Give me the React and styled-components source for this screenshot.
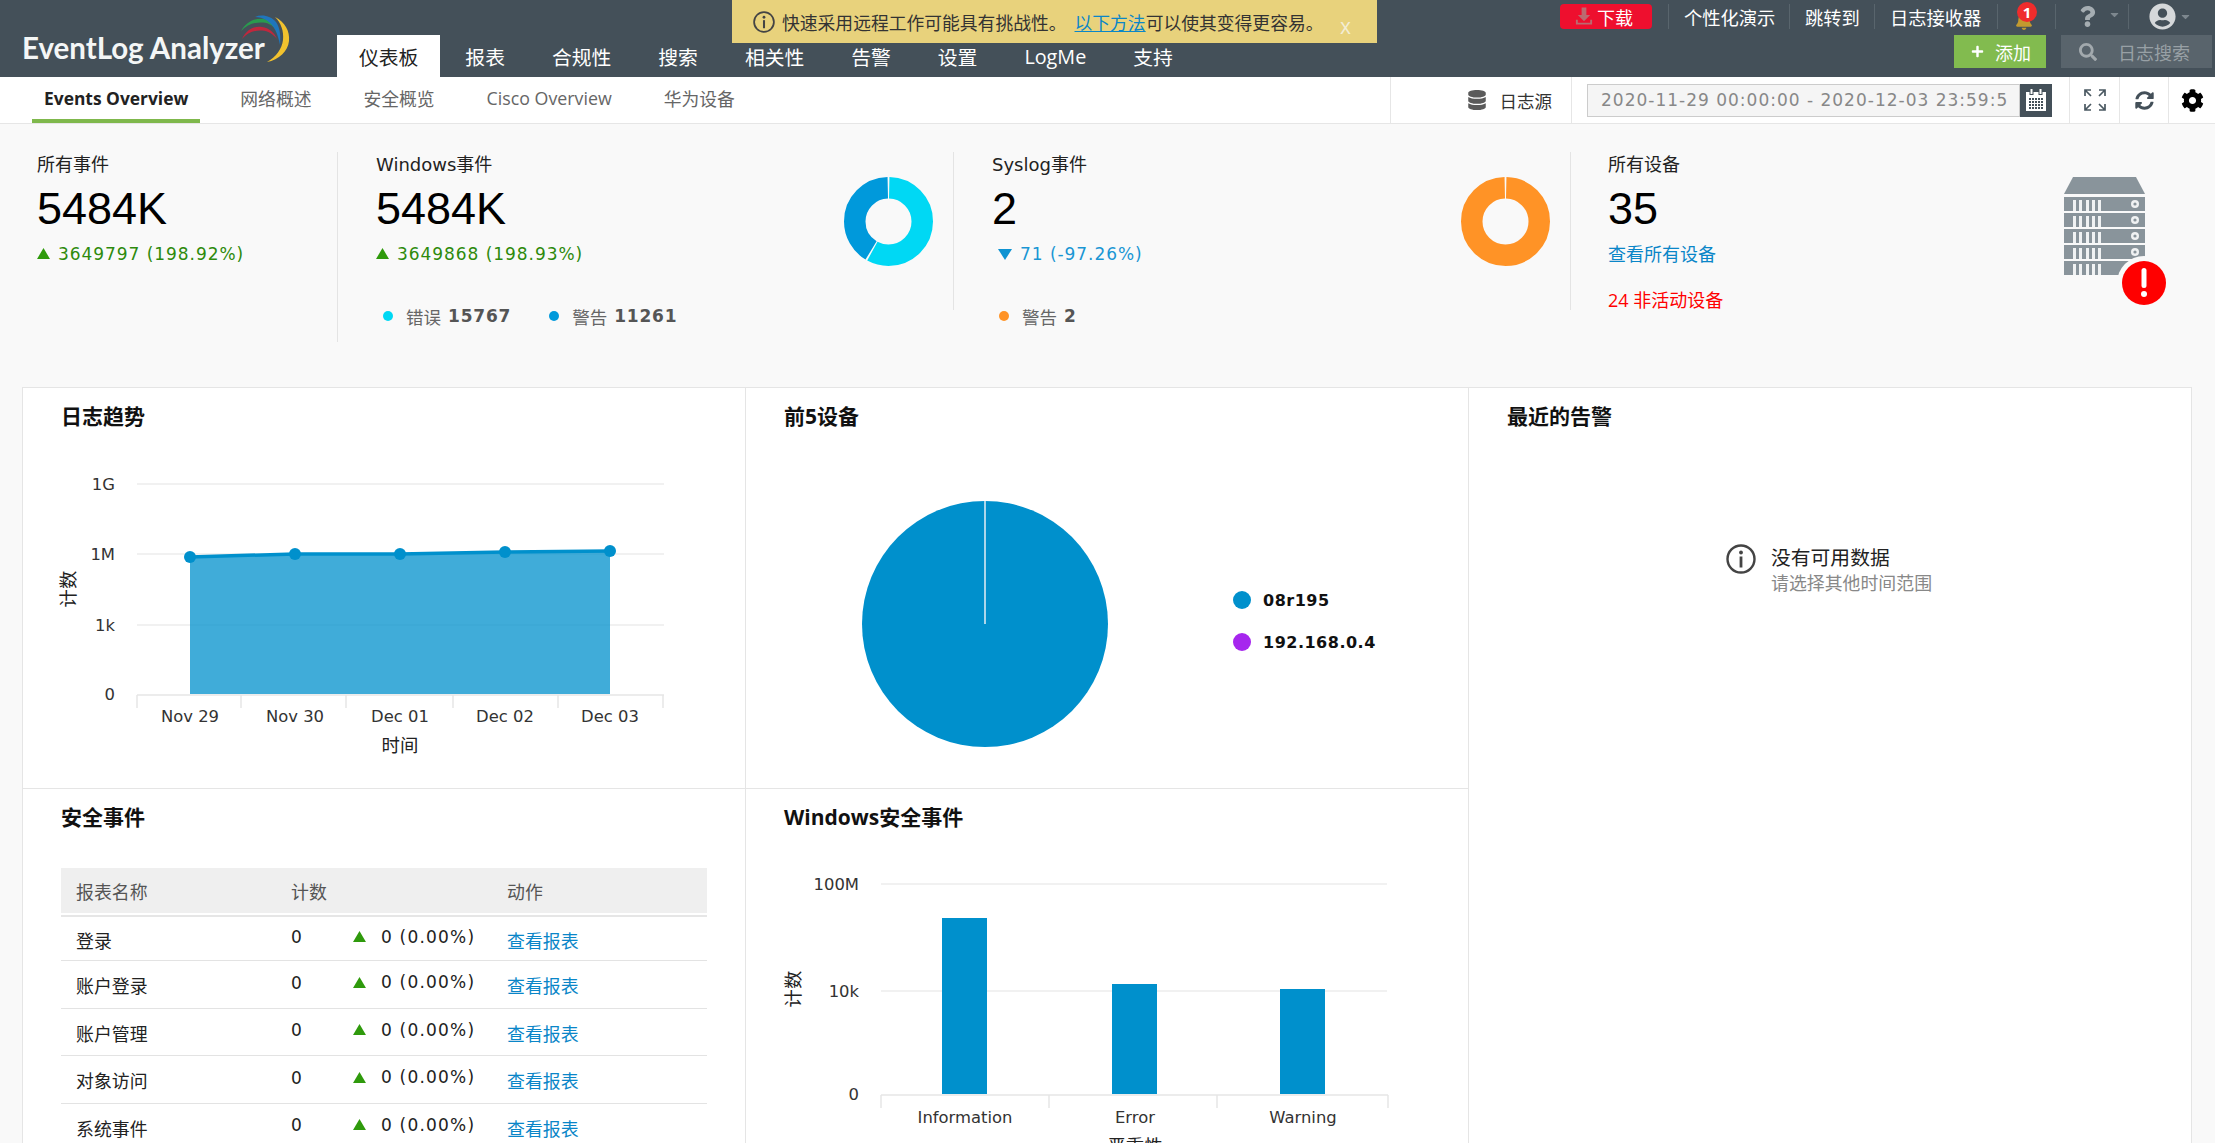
import React from "react";
import styled, { createGlobalStyle } from "styled-components";
import { FaDatabase, FaSyncAlt, FaCog, FaBell, FaSearch, FaPlus, FaQuestion, FaUserCircle, FaCaretDown } from "react-icons/fa";

const FONT = `"Open Sans", "Noto Sans CJK SC", sans-serif`;
const DATA_FONT = `"DejaVu Sans", "Noto Sans CJK SC", sans-serif`;
const BLUE = "#0090cc";
const LINK = "#0a86c8";

const GlobalStyle = createGlobalStyle`
  html, body {
    margin: 0;
    height: 1143px;
    overflow: hidden;
    background: #fff;
    font-family: ${FONT};
    color: #222;
  }
  * { box-sizing: border-box; }
`;

const Page = styled.div`
  width: 2215px;
  height: 1143px;
  overflow: hidden;
  display: flex;
  flex-direction: column;
  background: #f9f9f9;
`;

/* ---------- top bar ---------- */
const Header = styled.header`
  position: relative;
  height: 77px;
  flex: none;
  background: #445059;
  display: flex;
  justify-content: space-between;
  padding-right: 3px;
`;
const Left = styled.div`
  display: flex;
  align-items: flex-end;
`;
const Logo = styled.div`
  position: relative;
  width: 337px;
  height: 77px;
  padding: 30px 0 0 22px;
  font-family: Lato, "Open Sans", sans-serif;
  font-size: 29.5px;
  line-height: 36px;
  font-weight: 700;
  color: #f4f6f6;
  white-space: nowrap;
`;
const LogoArc = styled.svg`
  position: absolute;
  left: 235px;
  top: 12px;
`;
const Tabs = styled.nav`
  display: flex;
  gap: 3px;
`;
const Tab = styled.a`
  height: 42px;
  padding: 1px 22px 0;
  display: flex;
  align-items: center;
  font-size: 19.8px;
  color: ${(p) => (p.$active ? "#222" : "#fff")};
  background: ${(p) => (p.$active ? "#fff" : "transparent")};
`;
const Banner = styled.div`
  position: absolute;
  left: 732px;
  top: 0;
  width: 645px;
  height: 43px;
  background: #e8d27c;
  display: flex;
  align-items: center;
  padding-left: 21px;
  font-size: 17.8px;
  color: #333;
  svg { margin-right: 7px; flex: none; }
  a { color: ${LINK}; text-decoration: underline; margin-left: 8px; }
`;
const BannerClose = styled.span`
  position: absolute;
  left: 608px;
  top: 14px;
  font-size: 21px;
  line-height: 24px;
  color: #f3edd5;
`;
const Right = styled.div`
  display: flex;
  flex-direction: column;
  align-items: flex-end;
  padding-top: 4px;
`;
const TopRow = styled.div`
  display: flex;
  align-items: center;
  height: 25px;
  margin-right: 19px;
`;
const Download = styled.a`
  width: 92px;
  height: 25px;
  margin-right: 16px;
  border-radius: 4px;
  background: #ee0f2e;
  color: #fff;
  font-size: 18px;
  display: flex;
  align-items: center;
  padding-left: 14px;
  gap: 3px;
`;
const TopLink = styled.a`
  height: 25px;
  width: ${(p) => p.$w}px;
  flex: none;
  display: flex;
  align-items: center;
  padding-left: ${(p) => p.$pad || 15}px;
  color: #fff;
  font-size: 18.3px;
  border-left: 1px solid #59656d;
  position: relative;
  white-space: nowrap;
`;
const Badge = styled.span`
  position: absolute;
  left: 19px;
  top: -2px;
  width: 20px;
  height: 20px;
  border-radius: 50%;
  background: #ef2c2c;
  color: #fff;
  font-size: 15px;
  font-weight: 700;
  line-height: 20px;
  text-align: center;
`;
const BottomRow = styled.div`
  display: flex;
  gap: 15px;
  margin-top: 6px;
`;
const AddButton = styled.a`
  width: 92px;
  height: 33px;
  background: #82bb4f;
  color: #fff;
  font-size: 18px;
  display: flex;
  align-items: center;
  padding-left: 17px;
  gap: 11px;
`;
const SearchBox = styled.div`
  width: 151px;
  height: 33px;
  background: #59646c;
  color: #98a0a5;
  font-size: 18px;
  display: flex;
  align-items: center;
  padding-left: 18px;
  gap: 21px;
`;

/* ---------- sub navigation ---------- */
const SubBar = styled.div`
  height: 47px;
  flex: none;
  background: #fff;
  border-bottom: 1px solid #e6e6e6;
  display: flex;
  justify-content: space-between;
`;
const SubTabs = styled.div`
  display: flex;
  padding-left: 32px;
  gap: 28px;
`;
const SubTab = styled.a`
  height: 46px;
  padding: 0 12px 1px;
  display: flex;
  align-items: center;
  font-size: ${(p) => (p.$active ? "17.4px" : "17.8px")};
  font-weight: ${(p) => (p.$active ? 700 : 400)};
  color: ${(p) => (p.$active ? "#222" : "#666")};
  border-bottom: 4px solid ${(p) => (p.$active ? "#7fb84c" : "transparent")};
`;
const Tools = styled.div`
  display: flex;
  align-items: stretch;
`;
const SourceCell = styled.div`
  width: 182px;
  border-left: 1px solid #e6e6e6;
  border-right: 1px solid #e6e6e6;
  display: flex;
  align-items: center;
  justify-content: flex-end;
  gap: 13px;
  padding-right: 19px;
  font-size: 17.5px;
  color: #333;
  svg { color: #5a5a5a; }
`;
const DateCell = styled.div`
  width: 497px;
  padding-left: 15px;
  display: flex;
  align-items: center;
`;
const DateInput = styled.div`
  width: 433px;
  height: 33px;
  background: #f5f5f5;
  border: 1px solid #ccc;
  color: #888;
  font-family: ${DATA_FONT};
  font-size: 17px;
  letter-spacing: 1px;
  line-height: 31px;
  padding-left: 13px;
  white-space: nowrap;
  overflow: hidden;
`;
const DateButton = styled.div`
  width: 32px;
  height: 33px;
  background: #445059;
  display: flex;
  align-items: center;
  justify-content: center;
`;
const IconCell = styled.div`
  width: ${(p) => p.$w}px;
  border-left: 1px solid #e6e6e6;
  display: flex;
  align-items: center;
  justify-content: center;
  color: ${(p) => p.$color || "#333"};
`;

/* ---------- stat strip ---------- */
const StatStrip = styled.section`
  height: 263px;
  flex: none;
  padding-top: 28px;
  display: flex;
  align-items: flex-start;
`;
const Stat = styled.div`
  width: ${(p) => (p.$w ? `${p.$w}px` : "auto")};
  flex: ${(p) => (p.$w ? "none" : 1)};
  height: ${(p) => p.$h}px;
  padding-left: ${(p) => p.$pad}px;
  padding-right: ${(p) => p.$padRight || 0}px;
  border-right: ${(p) => (p.$w ? "1px solid #e4e4e4" : "none")};
  display: flex;
  justify-content: space-between;
  align-items: flex-start;
`;
const StatTitle = styled.div`
  font-family: ${DATA_FONT};
  font-size: 18px;
  line-height: 25px;
  color: #222;
`;
const StatValue = styled.div`
  font-family: "Liberation Sans", sans-serif;
  font-size: 45px;
  line-height: 46px;
  margin-top: 9px;
  color: #000;
`;
const Delta = styled.div`
  margin-top: 10px;
  font-family: ${DATA_FONT};
  font-size: 17px;
  letter-spacing: 0.95px;
  line-height: 24px;
  height: 24px;
  white-space: nowrap;
  display: flex;
  align-items: center;
  gap: 8px;
  color: ${(p) => p.$color};
`;
const Legend = styled.div`
  margin-top: 38px;
  padding-left: ${(p) => p.$pad || 0}px;
  height: 24px;
  display: flex;
  align-items: center;
  gap: 38px;
  font-size: 17.5px;
  color: #666;
  white-space: nowrap;
`;
const LegendItem = styled.span`
  display: flex;
  align-items: center;
`;
const Dot = styled.i`
  width: 10px;
  height: 10px;
  border-radius: 50%;
  background: ${(p) => p.$color};
  margin-right: 13px;
`;
const LegendValue = styled.b`
  margin-left: 7px;
  font-family: ${DATA_FONT};
  font-size: 17px;
  color: #555;
  letter-spacing: 0.8px;
`;
const StatLink = styled.a`
  display: block;
  margin-top: 10px;
  font-size: 18px;
  line-height: 24px;
  color: ${LINK};
`;
const Inactive = styled.div`
  margin-top: 22px;
  font-size: 18px;
  line-height: 24px;
  color: #f00;
`;
const DonutWrap = styled.svg`
  margin-top: 25px;
  flex: none;
`;
const ServerIcon = styled.svg`
  margin-top: 25px;
  flex: none;
`;

/* ---------- panels ---------- */
const Panels = styled.section`
  margin-left: 22px;
  width: 2170px;
  flex: none;
  height: 800px;
  background: #fff;
  border: 1px solid #e5e5e5;
  display: grid;
  grid-template-columns: 723px 723px 1fr;
  grid-template-rows: 401px 1fr;
`;
const Panel = styled.div`
  border-right: ${(p) => (p.$last ? "none" : "1px solid #e5e5e5")};
  border-bottom: ${(p) => (p.$bottom ? "1px solid #e5e5e5" : "none")};
  grid-column: ${(p) => p.$col};
  grid-row: ${(p) => p.$row};
  padding: 14px 0 0 38px;
`;
const PanelTitle = styled.h3`
  margin: 0 0 1px;
  font-size: 21px;
  line-height: 28px;
  font-weight: 700;
  color: #111;
`;
const Chart = styled.svg`
  display: block;
  margin-left: -38px;
  text {
    font-family: ${DATA_FONT};
    font-size: 16.4px;
    fill: #333;
  }
  .axis-title {
    font-size: 18.4px;
    fill: #222;
  }
`;
const PieRow = styled.div`
  display: flex;
  align-items: center;
  margin-left: -38px;
`;
const PieLegend = styled.div`
  display: flex;
  flex-direction: column;
  gap: 20px;
  margin-top: 50px;
`;
const PieLegendItem = styled.div`
  height: 22px;
  display: flex;
  align-items: center;
  gap: 12px;
  font-family: ${DATA_FONT};
  font-size: 16px;
  font-weight: 700;
  letter-spacing: 0.5px;
  color: #111;
  &::before {
    content: "";
    width: 18px;
    height: 18px;
    border-radius: 50%;
    background: ${(p) => p.$color};
  }
`;
const Empty = styled.div`
  display: flex;
  gap: 15px;
  margin: 114px 0 0 219px;
`;
const EmptyText = styled.div`
  padding-top: 1px;
  font-size: 19.8px;
  line-height: 26px;
  color: #222;
  small {
    display: block;
    font-size: 17.9px;
    line-height: 24px;
    color: #888;
  }
`;

/* ---------- table ---------- */
const Table = styled.div`
  width: 646px;
  margin-top: 37px;
  font-size: 17.9px;
`;
const Row = styled.div`
  display: grid;
  grid-template-columns: 215px 62px 154px 1fr;
  padding: ${(p) => (p.$head ? "0" : "2px")} 0 0 15px;
  height: ${(p) => (p.$head ? "45px" : "47.5px")};
  align-items: center;
  background: ${(p) => (p.$head ? "#efefef" : "transparent")};
  color: ${(p) => (p.$head ? "#555" : "#222")};
  border-bottom: ${(p) => (p.$head ? "none" : "1.5px solid #e3e3e3")};
  &:nth-child(2) { border-top: 2px solid #e6e6e6; margin-top: 2px; height: 46px; }
`;
const Num = styled.span`
  font-family: ${DATA_FONT};
  font-size: 17px;
  margin-top: -5px;
`;
const DeltaCell = styled.span`
  display: flex;
  align-items: center;
  gap: 15px;
  font-family: ${DATA_FONT};
  font-size: 17px;
  letter-spacing: 1.2px;
  margin-top: -6px;
  white-space: nowrap;
`;
const Link = styled.a`
  color: ${LINK};
`;

const Up = ({ size = 13 }) => (
  <svg width={size} height={size * 0.85} viewBox="0 0 12 10.2" style={{ flex: "none" }}>
    <path d="M6 0 12 10.2H0Z" fill="#2f9a0c" />
  </svg>
);

const Donut = ({ parts }) => {
  let offset = 0;
  return (
    <DonutWrap width="89" height="89" viewBox="0 0 89 89">
      <g transform="rotate(-90 44.5 44.5)">
        {parts.map(([value, color]) => {
          const el = (
            <circle
              key={color}
              cx="44.5"
              cy="44.5"
              r="33.75"
              fill="none"
              stroke={color}
              strokeWidth="21.5"
              pathLength="100"
              strokeDasharray={`${value - 0.7} ${100 - value + 0.7}`}
              strokeDashoffset={-offset - 0.35}
            />
          );
          offset += value;
          return el;
        })}
      </g>
    </DonutWrap>
  );
};

const Server = () => (
  <ServerIcon width="103" height="130" viewBox="0 0 103 130">
    <path d="M9 0H72L81 17H0Z" fill="#89949b" />
    {[0, 1, 2, 3, 4].map((i) => (
      <g key={i} transform={`translate(0 ${20 + i * 16})`}>
        <rect width="81" height="14" fill="#89949b" />
        {[9, 15, 22, 28, 34].map((x) => (
          <rect key={x} x={x} y="3" width="3" height="11" fill="#f0f2f3" />
        ))}
        <circle cx="71" cy="7" r="4" fill="#f0f2f3" />
        <circle cx="71" cy="7" r="1.6" fill="#89949b" />
      </g>
    ))}
    <circle cx="80" cy="106" r="27" fill="#f9f9f9" />
    <circle cx="80" cy="106" r="22" fill="#f00" />
    <rect x="77.5" y="91" width="5" height="20" rx="2.5" fill="#fff" />
    <circle cx="80" cy="117" r="3" fill="#fff" />
  </ServerIcon>
);

const trendPoints = [[190, 557], [295, 554], [400, 554], [505, 552], [610, 551]];

// coordinates below are page pixels, X0/Y0 bring them back to the chart's corner
const TrendChart = () => {
  const X0 = -23;
  const Y0 = -431;
  const line = trendPoints.map(([x, y]) => `${x + X0},${y + Y0}`).join(" ");
  return (
    <Chart width="722" height="330" viewBox="0 0 722 330">
      {[484, 554, 625].map((y) => (
        <line key={y} x1={137 + X0} x2={664 + X0} y1={y + Y0} y2={y + Y0} stroke="#ececec" strokeWidth="1.5" />
      ))}
      <polygon
        points={`${190 + X0},${694 + Y0} ${line} ${610 + X0},${694 + Y0}`}
        fill={BLUE}
        fillOpacity="0.75"
      />
      <polyline points={line} fill="none" stroke={BLUE} strokeWidth="3.5" />
      {trendPoints.map(([x, y]) => (
        <circle key={x} cx={x + X0} cy={y + Y0} r="6" fill={BLUE} />
      ))}
      <line x1={137 + X0} x2={664 + X0} y1={695 + Y0} y2={695 + Y0} stroke="#e6e6e6" strokeWidth="1.5" />
      {[137, 241, 346, 453, 558, 663].map((x) => (
        <line key={x} x1={x + X0} x2={x + X0} y1={695 + Y0} y2={708 + Y0} stroke="#e6e6e6" strokeWidth="1.5" />
      ))}
      {[["1G", 484], ["1M", 554], ["1k", 625], ["0", 694]].map(([t, y]) => (
        <text key={t} x={115 + X0} y={y + Y0 + 6} textAnchor="end">{t}</text>
      ))}
      {["Nov 29", "Nov 30", "Dec 01", "Dec 02", "Dec 03"].map((t, i) => (
        <text key={t} x={190 + i * 105 + X0} y={722 + Y0} textAnchor="middle">{t}</text>
      ))}
      <text className="axis-title" x={400 + X0} y={752 + Y0} textAnchor="middle">时间</text>
      <text className="axis-title" transform={`translate(${75 + X0} ${589 + Y0}) rotate(-90)`} textAnchor="middle">计数</text>
    </Chart>
  );
};

const bars = [[942, 918, "Information"], [1112, 984, "Error"], [1280, 989, "Warning"]];

const SeverityChart = () => {
  const X0 = -746;
  const Y0 = -832;
  return (
    <Chart width="722" height="330" viewBox="0 0 722 330">
      {[884, 991].map((y) => (
        <line key={y} x1={881 + X0} x2={1387 + X0} y1={y + Y0} y2={y + Y0} stroke="#ececec" strokeWidth="1.5" />
      ))}
      {bars.map(([x, top]) => (
        <rect key={x} x={x + X0} y={top + Y0} width="45" height={1094 - top} fill={BLUE} />
      ))}
      <line x1={881 + X0} x2={1388 + X0} y1={1095 + Y0} y2={1095 + Y0} stroke="#e6e6e6" strokeWidth="1.5" />
      {[881, 1049, 1217, 1388].map((x) => (
        <line key={x} x1={x + X0} x2={x + X0} y1={1095 + Y0} y2={1108 + Y0} stroke="#e6e6e6" strokeWidth="1.5" />
      ))}
      {[["100M", 884], ["10k", 991], ["0", 1094]].map(([t, y]) => (
        <text key={t} x={859 + X0} y={y + Y0 + 6} textAnchor="end">{t}</text>
      ))}
      {bars.map(([x, , t]) => (
        <text key={t} x={x + 23 + X0} y={1123 + Y0} textAnchor="middle">{t}</text>
      ))}
      <text className="axis-title" x={1135 + X0} y={1153 + Y0} textAnchor="middle">严重性</text>
      <text className="axis-title" transform={`translate(${800 + X0} ${989 + Y0}) rotate(-90)`} textAnchor="middle">计数</text>
    </Chart>
  );
};

const rows = ["登录", "账户登录", "账户管理", "对象访问", "系统事件"];
const tabs = ["报表", "合规性", "搜索", "相关性", "告警", "设置", "LogMe", "支持"];
const subTabs = ["网络概述", "安全概览", "Cisco Overview", "华为设备"];

const InfoIcon = ({ size, color }) => (
  <svg width={size} height={size} viewBox="0 0 30 30">
    <circle cx="15" cy="15" r="13.5" fill="none" stroke={color} strokeWidth="2.4" />
    <circle cx="15" cy="8.5" r="1.9" fill={color} />
    <rect x="13.6" y="12.5" width="2.8" height="11" fill={color} />
  </svg>
);

export default function App() {
  return (
    <Page>
      <GlobalStyle />
      <Header>
        <Left>
          <Logo>
            EventLog Analyzer
            <LogoArc width="60" height="56" viewBox="0 0 60 56">
              <path d="M7 27C12 17 19 14 27 15C34 16 39 20 42 27C38 22 33 19 27 18.500C19 18 12 21 7 27Z" fill="#c0273d" />
              <path d="M6 19C12 9 20 6 29 7C36 8 41 13 43 21C39 14 34 11 28 10.500C19 10 12 13 6 19Z" fill="#2a9a4e" />
              <path d="M20 5C27 2 36 4 41 10C45 16 46 24 45 33C43 22 39 13 32 8.500C28 6 24 5 20 5Z" fill="#1f76bc" />
              <path d="M40 5C50 10 55 19 54 29C53 39 44 48 32 50C41 45 47 37 48 28C49 19 46 11 40 5Z" fill="#f2c22e" />
            </LogoArc>
          </Logo>
          <Tabs>
            <Tab $active>仪表板</Tab>
            {tabs.map((t) => (
              <Tab key={t}>{t}</Tab>
            ))}
          </Tabs>
        </Left>
        <Banner>
          <InfoIcon size={22} color="#444" />
          快速采用远程工作可能具有挑战性。
          <a>以下方法</a>可以使其变得更容易。
          <BannerClose>x</BannerClose>
        </Banner>
        <Right>
          <TopRow>
            <Download>
              <svg width="20" height="21" viewBox="0 0 21 21">
                <path d="M8 1h5v8h4l-6.500 6.500L4 9h4Z M2 14v5h17v-5h-2v3H4v-3Z" fill="#bb6a70" />
              </svg>
              下载
            </Download>
            <TopLink $w={121}>个性化演示</TopLink>
            <TopLink $w={85}>跳转到</TopLink>
            <TopLink $w={123}>日志接收器</TopLink>
            <TopLink $w={58} $pad={17}>
              <FaBell size={18} color="#c39a2f" style={{ marginTop: 9 }} />
              <Badge>1</Badge>
            </TopLink>
            <TopLink $w={73} $pad={21}>
              <FaQuestion size={21} color="#a5adb2" />
              <FaCaretDown size={13} color="#7d878e" style={{ marginLeft: 10, marginTop: -4 }} />
            </TopLink>
            <TopLink $w={65} $pad={20}>
              <FaUserCircle size={27} color="#d5d8da" style={{ flex: "none" }} />
              <FaCaretDown size={13} color="#7d878e" style={{ marginLeft: 3, flex: "none" }} />
            </TopLink>
          </TopRow>
          <BottomRow>
            <AddButton>
              <FaPlus size={13} />
              添加
            </AddButton>
            <SearchBox>
              <FaSearch size={18} color="#a2a9ad" />
              日志搜索
            </SearchBox>
          </BottomRow>
        </Right>
      </Header>

      <SubBar>
        <SubTabs>
          <SubTab $active>Events Overview</SubTab>
          {subTabs.map((t) => (
            <SubTab key={t}>{t}</SubTab>
          ))}
        </SubTabs>
        <Tools>
          <SourceCell>
            <FaDatabase size={20} />
            日志源
          </SourceCell>
          <DateCell>
            <DateInput>2020-11-29 00:00:00 - 2020-12-03 23:59:5</DateInput>
            <DateButton>
              <svg width="22" height="24" viewBox="0 0 22 24">
                <path d="M1 4h20v19H1Z" fill="#fff" />
                <rect x="5" y="0.500" width="3" height="6" fill="#fff" stroke="#445059" />
                <rect x="14" y="0.500" width="3" height="6" fill="#fff" stroke="#445059" />
                {[10, 13, 16, 19].map((y) =>
                  [4, 7, 10, 13, 16].map((x) => (
                    <rect key={`${x}-${y}`} x={x} y={y} width="2" height="2" fill="#445059" />
                  ))
                )}
              </svg>
            </DateButton>
          </DateCell>
          <IconCell $w={50} $color="#4a5861">
            <svg width="24" height="24" viewBox="0 0 24 24" fill="none" stroke="currentColor" strokeWidth="1.7">
              <path d="M2 8V2H8 M2 2l6 6 M16 2h6v6 M22 2l-6 6 M2 16v6h6 M2 22l6-6 M16 22h6v-6 M22 22l-6-6" />
            </svg>
          </IconCell>
          <IconCell $w={49} $color="#445059">
            <FaSyncAlt size={19} />
          </IconCell>
          <IconCell $w={47} $color="#000">
            <FaCog size={23} />
          </IconCell>
        </Tools>
      </SubBar>

      <StatStrip>
        <Stat $w={338} $h={190} $pad={37}>
          <div>
            <StatTitle>所有事件</StatTitle>
            <StatValue>5484K</StatValue>
            <Delta $color="#2d8a0c"><Up />3649797 (198.92%)</Delta>
          </div>
        </Stat>
        <Stat $w={616} $h={158} $pad={38} $padRight={20}>
          <div>
            <StatTitle>Windows事件</StatTitle>
            <StatValue>5484K</StatValue>
            <Delta $color="#2d8a0c"><Up />3649868 (198.93%)</Delta>
            <Legend $pad={7}>
              <LegendItem><Dot $color="#00d8f4" />错误<LegendValue>15767</LegendValue></LegendItem>
              <LegendItem><Dot $color="#0099db" />警告<LegendValue>11261</LegendValue></LegendItem>
            </Legend>
          </div>
          <Donut parts={[[58.3, "#00d8f4"], [41.7, "#0099db"]]} />
        </Stat>
        <Stat $w={617} $h={158} $pad={38} $padRight={20}>
          <div>
            <StatTitle>Syslog事件</StatTitle>
            <StatValue>2</StatValue>
            <Delta $color="#1a96d4">
              <svg width="14" height="11" viewBox="0 0 14 11" style={{ marginLeft: 6 }}>
                <path d="M0 0H14L7 11Z" fill="#0e93d2" />
              </svg>
              71 (-97.26%)
            </Delta>
            <Legend $pad={7}>
              <LegendItem><Dot $color="#ff9326" />警告<LegendValue>2</LegendValue></LegendItem>
            </Legend>
          </div>
          <Donut parts={[[100, "#ff9326"]]} />
        </Stat>
        <Stat $h={158} $pad={37} $padRight={48}>
          <div>
            <StatTitle>所有设备</StatTitle>
            <StatValue>35</StatValue>
            <StatLink>查看所有设备</StatLink>
            <Inactive>24 非活动设备</Inactive>
          </div>
          <Server />
        </Stat>
      </StatStrip>

      <Panels>
        <Panel $bottom $col="1" $row="1">
          <PanelTitle>日志趋势</PanelTitle>
          <TrendChart />
        </Panel>
        <Panel $bottom $col="2" $row="1">
          <PanelTitle>前5设备</PanelTitle>
          <PieRow>
            <svg width="487" height="330" viewBox="0 0 487 330" style={{ flex: "none" }}>
              <circle cx="239" cy="193" r="123" fill={BLUE} />
              <line x1="239" y1="70" x2="239" y2="193" stroke="#e4eef4" strokeWidth="1.5" />
            </svg>
            <PieLegend>
              <PieLegendItem $color={BLUE}>08r195</PieLegendItem>
              <PieLegendItem $color="#a626ee">192.168.0.4</PieLegendItem>
            </PieLegend>
          </PieRow>
        </Panel>
        <Panel $last $col="3" $row="1 / span 2">
          <PanelTitle>最近的告警</PanelTitle>
          <Empty>
            <InfoIcon size={30} color="#444" />
            <EmptyText>
              没有可用数据
              <small>请选择其他时间范围</small>
            </EmptyText>
          </Empty>
        </Panel>
        <Panel $col="1" $row="2">
          <PanelTitle>安全事件</PanelTitle>
          <Table>
            <Row $head>
              <span>报表名称</span>
              <span>计数</span>
              <span />
              <span>动作</span>
            </Row>
            {rows.map((r) => (
              <Row key={r}>
                <span>{r}</span>
                <Num>0</Num>
                <DeltaCell><Up />0 (0.00%)</DeltaCell>
                <Link>查看报表</Link>
              </Row>
            ))}
          </Table>
        </Panel>
        <Panel $col="2" $row="2">
          <PanelTitle>Windows安全事件</PanelTitle>
          <SeverityChart />
        </Panel>
      </Panels>
    </Page>
  );
}
